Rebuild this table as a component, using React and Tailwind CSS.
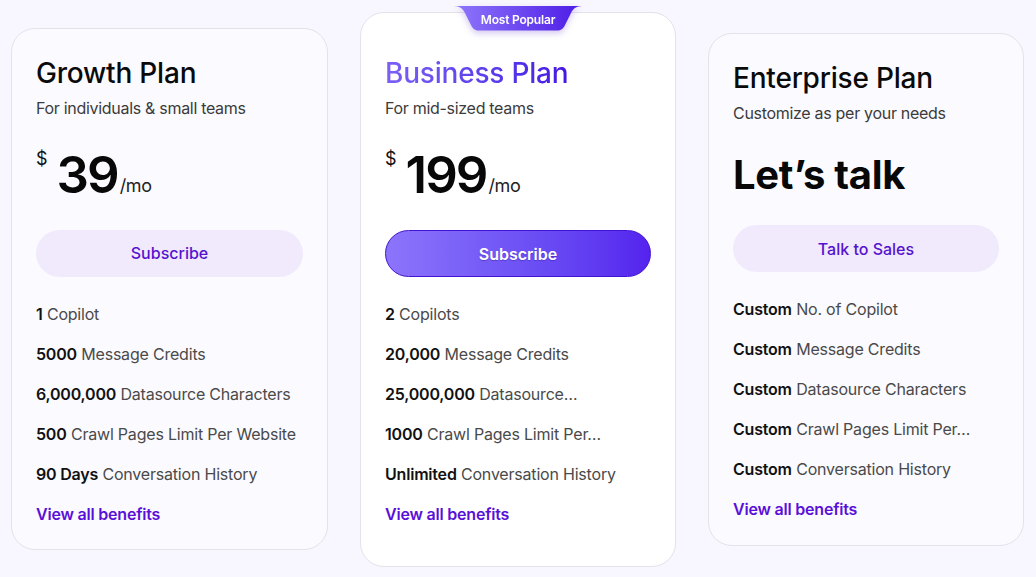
import React from "react";

const FONT = { fontFamily: "Inter, 'Noto Sans', sans-serif" };

const PLANS = [
  {
    name: "Growth Plan",
    desc: "For individuals & small teams",
    price: "39",
    cta: "Subscribe",
    features: [
      ["1", "Copilot"],
      ["5000", "Message Credits"],
      ["6,000,000", "Datasource Characters"],
      ["500", "Crawl Pages Limit Per Website"],
      ["90 Days", "Conversation History"],
    ],
  },
  {
    name: "Business Plan",
    desc: "For mid-sized teams",
    price: "199",
    cta: "Subscribe",
    popular: true,
    features: [
      ["2", "Copilots"],
      ["20,000", "Message Credits"],
      ["25,000,000", "Datasource…"],
      ["1000", "Crawl Pages Limit Per…"],
      ["Unlimited", "Conversation History"],
    ],
  },
  {
    name: "Enterprise Plan",
    desc: "Customize as per your needs",
    cta: "Talk to Sales",
    features: [
      ["Custom", "No. of Copilot"],
      ["Custom", "Message Credits"],
      ["Custom", "Datasource Characters"],
      ["Custom", "Crawl Pages Limit Per…"],
      ["Custom", "Conversation History"],
    ],
  },
];

function PopularBadge() {
  return (
    <div className="absolute -top-[7px] left-1/2 -translate-x-1/2 w-[128px] h-[25px] drop-shadow-[0_3px_3px_rgba(80,40,200,0.25)]">
      <svg width="128" height="25" viewBox="0 0 128 25" className="absolute inset-0">
        <defs>
          <linearGradient id="badgeGrad" x1="0" y1="0" x2="1" y2="0">
            <stop offset="0" stopColor="#8f78fb" />
            <stop offset="1" stopColor="#4c1be6" />
          </linearGradient>
        </defs>
        <path
          d="M0 0 H128 C122 0 119 3 117 7 L111 19 C109 23 107 24.5 103 24.5 H25 C21 24.5 19 23 17 19 L11 7 C9 3 6 0 0 0 Z"
          fill="url(#badgeGrad)"
        />
      </svg>
      <div className="relative flex h-full items-center justify-center pt-[2px] text-[12px] font-semibold tracking-[-0.2px] text-white">
        Most Popular
      </div>
    </div>
  );
}

function PlanCard({ plan, first }) {
  const isPopular = !!plan.popular;
  const isCustom = !plan.price;

  let pad = "bg-[#fbfaff] pt-[27px] pb-[23px]";
  if (isPopular) pad = "bg-white pt-[43px] pb-[40px] mt-[2px]";
  if (isCustom) pad = "bg-[#fbfaff] pt-[27px] pb-[24px] mt-[2px]";

  return (
    <div
      className={
        "relative shrink-0 rounded-[24px] border border-[#e4e2ea] px-[24px] " +
        (first ? "w-[317px] " : "w-[316px] ") +
        pad
      }
    >
      {isPopular && <PopularBadge />}

      <h2
        className={
          "text-[28px] leading-[34px] font-medium tracking-[-0.2px] " +
          (isPopular
            ? "bg-gradient-to-r from-[#7c5ff6] to-[#4614e2] bg-clip-text text-transparent w-fit"
            : "text-[#0a0a0a]")
        }
      >
        {plan.name}
      </h2>
      <p className="mt-[6px] text-[16px] leading-6 tracking-[-0.3px] text-[#3b3b3b]">{plan.desc}</p>

      {isCustom ? (
        <div className="mt-[30px] text-[40px] leading-[40px] font-bold tracking-[-0.3px] text-[#080808]">
          Let’s talk
        </div>
      ) : (
        <div className="mt-[29px] flex items-start h-[52px]">
          <span className="mt-[1px] text-[18px] leading-[18px] text-[#111]">$</span>
          <span className="ml-[9px] text-[51px] leading-[52px] font-semibold tracking-[-2px] text-[#080808]">
            {plan.price}
          </span>
          <span className="ml-[2px] mt-[28px] text-[18px] leading-[18px] tracking-[-0.3px] text-[#222]">/mo</span>
        </div>
      )}

      <button
        className={
          "flex h-[47px] w-full items-center justify-center rounded-full text-[16px] " +
          (isCustom ? "mt-[30px] " : "mt-[29px] ") +
          (isPopular
            ? "bg-gradient-to-r from-[#8d74fb] to-[#5522ee] border border-[#4213d2] font-semibold text-white [text-shadow:0_1px_1px_rgba(40,10,120,0.35)]"
            : "bg-[#f1eafd] font-medium text-[#5512cf]")
        }
      >
        {plan.cta}
      </button>

      <ul className="mt-[25px] flex flex-col gap-4">
        {plan.features.map(([strong, rest]) => (
          <li
            key={strong + rest}
            className="text-[16px] leading-6 tracking-[-0.2px] text-[#4a4a4a] whitespace-nowrap"
          >
            <span className="font-semibold text-[#111]">{strong}</span> {rest}
          </li>
        ))}
        <li className="text-[16px] leading-6 font-semibold tracking-[-0.2px] text-[#5a10d8]">View all benefits</li>
      </ul>
    </div>
  );
}

export default function App() {
  return (
    <div style={FONT} className="flex h-[577px] w-[1036px] items-center gap-8 bg-[#f8f6fe] pl-[11px]">
      {PLANS.map((p, i) => (
        <PlanCard key={p.name} plan={p} first={i === 0} />
      ))}
    </div>
  );
}
